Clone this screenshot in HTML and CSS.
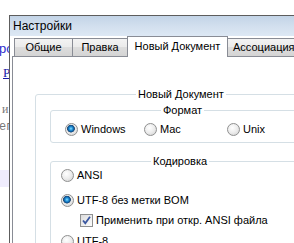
FILE: index.html
```html
<!DOCTYPE html>
<html lang="ru">
<head>
  <meta charset="UTF-8" />
  <title>Настройки</title>
  <link rel="stylesheet" href="styles.css">
</head>
<body>
  <div class="behind">
    <div class="bl b1">ро</div>
    <div class="bl b2">Р</div>
    <div class="bl b3">и</div>
    <div class="bl b4">еп</div>
    <div class="band"></div>
  </div>

  <div class="window">
    <div class="titlebar">Настройки</div>
    <div class="tabs">
      <div class="tab t1">Общие</div>
      <div class="tab t2">Правка</div>
      <div class="tab t3 active">Новый Документ</div>
      <div class="tab t4">Ассоциация</div>
    </div>
    <div class="page">
      <fieldset class="group outer">
        <legend>Новый Документ</legend>

        <fieldset class="group format">
          <legend>Формат</legend>
          <div class="row">
            <label class="opt"><input type="radio" name="fmt" checked>Windows</label>
            <label class="opt"><input type="radio" name="fmt">Mac</label>
            <label class="opt"><input type="radio" name="fmt">Unix</label>
          </div>
        </fieldset>

        <fieldset class="group enc">
          <legend>Кодировка</legend>
          <label class="opt ansi"><input type="radio" name="enc">ANSI</label>
          <label class="opt nobom"><input type="radio" name="enc" checked>UTF-8 без метки BOM</label>
          <label class="opt sub">
            <span class="check"><svg width="11" height="11" viewBox="0 0 11 11"><path d="M2 5.5 L4.3 8.2 L9 1.8" fill="none" stroke="#3a57a0" stroke-width="1.8"/></svg></span>
            Применить при откр. ANSI файла
          </label>
          <label class="opt"><input type="radio" name="enc">UTF-8</label>
        </fieldset>
      </fieldset>
    </div>
  </div>
</body>
</html>
```

FILE: styles.css
```css
body {
  margin: 0;
  width: 294px;
  height: 243px;
  overflow: hidden;
  position: relative;
  background-color: #fff;
  font-family: "Liberation Sans", Arial, sans-serif;
  font-size: 11px;
  color: #000;
}

/* editor window behind the dialog */
.behind {
  padding-top: 43px;
  font-family: "Liberation Serif", serif;
  white-space: nowrap;
}
.bl {
  height: 12px;
  line-height: 12px;
}
.b1 {
  color: #2a2acc;
  font-family: "Liberation Sans", sans-serif;
  font-size: 13px;
  margin-left: -1px;
}
.b2 {
  color: #1a1aa8;
  font-size: 13px;
  margin-top: 12px;
  margin-left: 3px;
  text-decoration: underline;
}
.b3 {
  color: #777;
  font-size: 12px;
  margin-top: 24px;
  margin-left: 2px;
}
.b4 {
  color: #777;
  font-family: "Liberation Mono", monospace;
  font-size: 12px;
  margin-top: 6px;
  margin-left: -1px;
}
.band {
  margin-top: 37px;
  height: 17px;
  background-color: #efecfd;
}

/* dialog */
.window {
  position: absolute;
  left: 9px;
  top: 15px;
  width: 300px;
  height: 240px;
  border-left: 1px solid #5d5d5d;
  border-top: 1px solid #5d5d5d;
  background-color: #fff;
}
.titlebar {
  height: 20px;
  line-height: 20px;
  padding-left: 3px;
  font-size: 12px;
  background: linear-gradient(#c3d4e7, #d2dfee 50%, #dde8f4);
}
.tabs {
  display: flex;
  align-items: flex-end;
  height: 21px;
  margin-left: 4px;
  margin-bottom: -1px;
  position: relative;
  z-index: 1;
}
.tab {
  box-sizing: border-box;
  height: 19px;
  line-height: 17px;
  text-align: center;
  white-space: nowrap;
  border: 1px solid #898c95;
  background: linear-gradient(#f3f3f3, #ebebeb 45%, #dddddd 50%, #d4d4d4);
  margin-left: -1px;
}
.t1 { width: 59px; margin-left: 0; }
.t2 { width: 56px; }
.t3 { width: 101px; }
.t4 { width: 80px; text-align: left; padding-left: 5px; }
.tab.active {
  height: 21px;
  line-height: 19px;
  border-bottom: none;
  background: #fff;
}
.page {
  margin-left: 2px;
  height: 200px;
  border: 1px solid #898c95;
  padding: 31px 0 0 22px;
}

/* group boxes */
.group {
  margin: 0;
  border: 1px solid #d5dfe5;
  border-radius: 3px;
}
.group legend {
  padding: 0 2px;
  line-height: 13px;
}
.outer {
  padding: 3px 0 0 14px;
  height: 200px;
}
.outer > legend {
  margin-left: 86px;
}
.format {
  padding: 6px 0 6px 14px;
}
.format legend {
  margin-left: 96px;
}
.enc {
  margin-top: 12px;
  padding: 1px 0 0 10px;
  display: flex;
  flex-direction: column;
}
.enc legend {
  margin-left: 90px;
}

.row {
  display: grid;
  grid-template-columns: 79px 83px auto;
}
.opt {
  display: flex;
  align-items: center;
  height: 13px;
  line-height: 13px;
  white-space: nowrap;
}
.ansi { margin-bottom: 12px; }
.nobom { margin-bottom: 7px; }
.sub { margin-left: 19px; margin-bottom: 8px; }

input[type="radio"] {
  appearance: none;
  box-sizing: border-box;
  width: 13px;
  height: 13px;
  margin: 0 3px 0 0;
  border-radius: 50%;
  border: 1px solid #8f9090;
  background: radial-gradient(circle at 40% 35%, #ffffff, #ececec 50%, #cdcdcd);
  flex-shrink: 0;
}
input[type="radio"]:checked {
  background:
    radial-gradient(circle at 45% 42%, #8fe0ff 0, #2a9be0 1.5px, #0b5a9e 3px, #2c4f74 3.6px, transparent 4.2px),
    radial-gradient(circle at 40% 35%, #ffffff, #ececec 50%, #cdcdcd);
}
.check {
  box-sizing: border-box;
  width: 13px;
  height: 13px;
  margin-right: 3px;
  border: 1px solid #8f9090;
  background: linear-gradient(135deg, #dcdcdc, #fdfdfd);
  display: flex;
  align-items: center;
  justify-content: center;
}
.check svg {
  display: block;
}
```
